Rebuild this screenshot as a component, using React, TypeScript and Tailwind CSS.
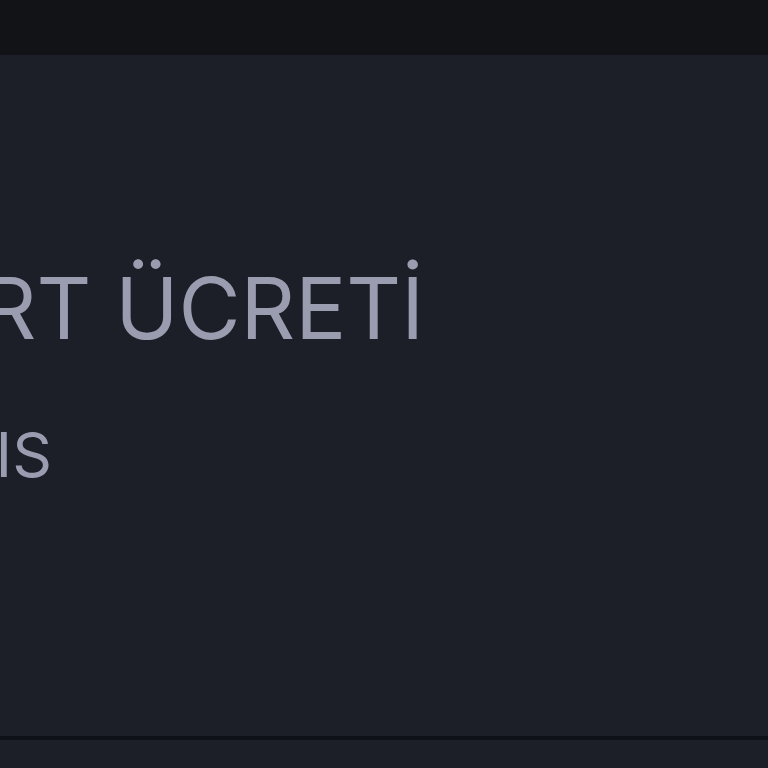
export default function App() {
  return (
    <div className="h-[768px] w-[768px] overflow-hidden bg-[#1d1f28] font-['Inter',sans-serif]">
      {/* Top bar */}
      <div className="h-[55px] bg-[#121317]" />

      {/* Panel */}
      <div className="h-[681px] overflow-hidden bg-[#1d1f28] pt-[211px]">
        <div className="flex w-[424px] justify-end">
          <span className="whitespace-nowrap text-[85px] leading-[85px] text-[#9a9db0]">
            KART ÜCRETİ
          </span>
        </div>
        <div className="mt-[73px] flex w-[52px] justify-end">
          <span className="whitespace-nowrap text-[62px] leading-[62px] text-[#9a9db0]">
            AIS
          </span>
        </div>
      </div>

      <div className="h-[4px] bg-[#0f1119]" />
      <div className="h-[28px] bg-[#1d1f28]" />
    </div>
  );
}
